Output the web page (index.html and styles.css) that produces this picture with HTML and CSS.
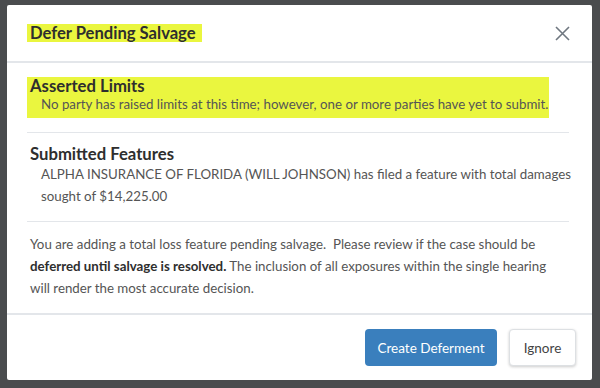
FILE: index.html
```html
<!DOCTYPE html>
<html lang="en">
<head>
    <meta charset="UTF-8">
    <meta name="viewport" content="width=device-width, initial-scale=1.0">
    <title>Defer Pending Salvage</title>
    <link rel="stylesheet" href="styles.css">
</head>
<body>
    <div class="backdrop">
        <div class="modal">
            <div class="modal-header">
                <h2 class="modal-title"><span class="hl">Defer Pending Salvage</span></h2>
                <button class="btn-close" aria-label="Close">
                    <svg width="15" height="15" viewBox="0 0 15 15">
                        <path d="M1 1 L14 14 M14 1 L1 14" stroke="#6f7780" stroke-width="1.6" fill="none"/>
                    </svg>
                </button>
            </div>

            <div class="modal-body">
                <div class="section">
                    <div class="hl-block">
                        <h3>Asserted Limits</h3>
                        <p class="indent tight">No party has raised limits at this time; however, one or more parties have yet to submit.</p>
                    </div>
                </div>

                <div class="section">
                    <h3>Submitted Features</h3>
                    <p class="indent wide">ALPHA INSURANCE OF FLORIDA (WILL JOHNSON) has filed a feature with total damages sought of $14,225.00</p>
                </div>

                <p class="note">You are adding a total loss feature pending salvage.&nbsp; Please review if the case should be <strong>deferred until salvage is resolved.</strong> The inclusion of all exposures within the single hearing will render the most accurate decision.</p>
            </div>

            <div class="modal-footer">
                <button class="btn btn-primary">Create Deferment</button>
                <button class="btn btn-default">Ignore</button>
            </div>
        </div>
    </div>
</body>
</html>
```

FILE: styles.css
```css
body {
    margin: 0;
    font-family: Lato, "Open Sans", Arial, sans-serif;
    background-color: #4a4c4e;
    height: 388px;
    overflow: hidden;
}
.backdrop {
    padding: 5px 8px 8px 7px;
}
.modal {
    background-color: #fff;
    width: 585px;
    height: 375px;
    border-radius: 2px;
    display: flex;
    flex-direction: column;
}
.modal-header {
    height: 56px;
    display: flex;
    align-items: center;
    justify-content: space-between;
    padding: 0 22px 0 20px;
    border-bottom: 2px solid #e3e6ea;
}
.modal-title {
    margin: 0;
    font-size: 16.6px;
    line-height: 18px;
    font-weight: bold;
    color: #2e2e2e;
}
.hl {
    display: inline-block;
    background-color: #eaf63f;
    padding: 0 6px 0 3px;
}
.btn-close {
    border: none;
    background: none;
    padding: 0;
    cursor: pointer;
    display: flex;
}
.modal-body {
    flex: 1;
    padding: 14px 23px 0 20px;
}
.section {
    border-bottom: 1px solid #e3e6ea;
    padding-bottom: 14px;
    margin-bottom: 12px;
}
.section h3 {
    margin: 0;
    font-size: 16.7px;
    line-height: 18px;
    font-weight: bold;
    color: #2e2e2e;
    padding-left: 3px;
}
.hl-block {
    background-color: #eaf63f;
    width: 522px;
    padding-bottom: 5px;
}
.indent {
    margin: 0 0 0 14px;
    font-size: 13.3px;
    line-height: 22px;
    color: #555;
}
.indent.tight {
    line-height: 18px;
}
.indent.wide {
    margin-right: -20px;
}
.note {
    margin: -1px 0 0 3px;
    font-size: 13.3px;
    line-height: 22px;
    color: #555;
}
.note strong {
    color: #2e2e2e;
}
.modal-footer {
    height: 65px;
    border-top: 2px solid #e3e6ea;
    display: flex;
    align-items: center;
    justify-content: flex-end;
    gap: 12px;
    padding: 0 16px 0 0;
}
.btn {
    height: 37px;
    border-radius: 4px;
    font-family: inherit;
    font-size: 13.5px;
    white-space: nowrap;
    padding: 0;
    cursor: pointer;
}
.btn-primary {
    background-color: #3a7fbd;
    color: #fff;
    border: none;
    width: 132px;
}
.btn-default {
    background-color: #fff;
    color: #444;
    border: 1px solid #dde0e3;
    box-shadow: 0 1px 3px rgba(0, 0, 0, 0.2);
    width: 67px;
}
```
